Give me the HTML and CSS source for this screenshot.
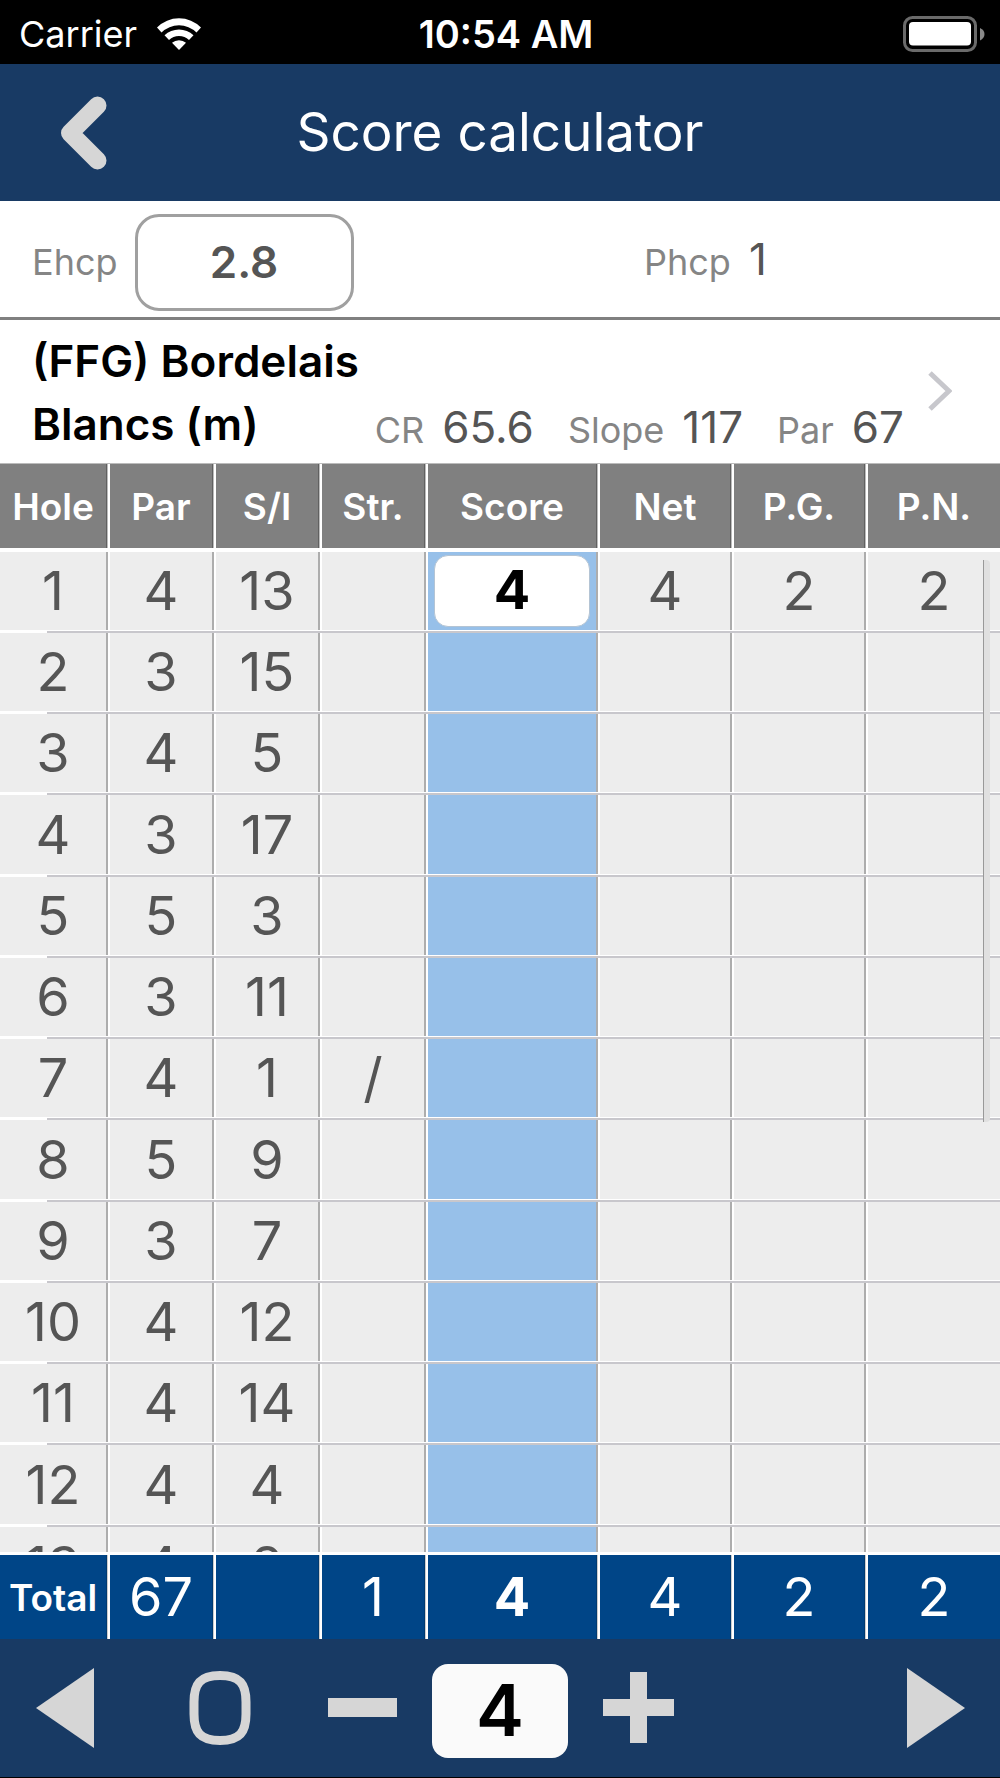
FILE: index.html
```html
<!DOCTYPE html>
<html lang="en">
<head>
<meta charset="utf-8">
<meta name="viewport" content="width=device-width, initial-scale=1">
<title>Score calculator</title>
<link rel="stylesheet" href="styles.css">
</head>
<body>
<div class="status">
  <div class="status-left">
    <span>Carrier</span>
    <svg class="wifi" viewBox="0 0 44 32" aria-hidden="true">
      <path d="M0 9.500A31 31 0 0 1 44 9.500L39.500 14.500A25 25 0 0 0 4.500 14.500Z"/>
      <path d="M7.500 17.200A21 21 0 0 1 36.500 17.200L32 22A14.500 14.500 0 0 0 12 22Z"/>
      <path d="M15 24.800A10.500 10.500 0 0 1 29 24.800L22 32Z"/>
    </svg>
  </div>
  <time class="clock">10:54 AM</time>
  <svg class="battery" viewBox="0 0 82 36" aria-hidden="true">
    <rect x="1.500" y="1.500" width="71" height="33" rx="8" fill="none" stroke="#6a6a6a" stroke-width="3"/>
    <rect x="6" y="6" width="62" height="23.500" rx="4" fill="#fff"/>
    <path d="M77 12Q81.500 14 81.500 18T77 24.500Z" fill="#8a8a8a"/>
  </svg>
</div>

<header class="navbar">
  <button class="back" type="button" aria-label="Back">
    <svg class="icon-back" viewBox="0 0 46 74" aria-hidden="true">
      <path d="M36.500 9.500L9 37L36.500 64.500" fill="none" stroke="#d6d6d6" stroke-width="18" stroke-linecap="round" stroke-linejoin="round"/>
    </svg>
  </button>
  <h1 class="title">Score calculator</h1>
</header>

<section class="handicap">
  <div class="exact">
    <label class="caption" for="ehcp">Ehcp</label>
    <input class="ehcp" id="ehcp" type="text" inputmode="decimal" value="2.8">
  </div>
  <div class="playing">
    <span class="caption">Phcp</span>
    <span class="value">1</span>
  </div>
</section>

<a class="course" href="#course">
  <span class="course-name">(FFG) Bordelais</span>
  <span class="course-tee">Blancs (m)</span>
  <span class="ratings">
    <span class="rating"><span class="caption">CR</span><span class="value">65.6</span></span>
    <span class="rating"><span class="caption">Slope</span><span class="value">117</span></span>
    <span class="rating"><span class="caption">Par</span><span class="value">67</span></span>
  </span>
  <svg class="chevron" viewBox="0 0 24 40" aria-hidden="true">
    <path d="M2 2L21 20L2 38" fill="none" stroke="#c7c7cc" stroke-width="5"/>
  </svg>
</a>

<main class="card">
  <table class="scores">
    <thead>
      <tr><th scope="col">Hole</th><th scope="col">Par</th><th scope="col">S/I</th><th scope="col">Str.</th><th scope="col">Score</th><th scope="col">Net</th><th scope="col">P.G.</th><th scope="col">P.N.</th></tr>
    </thead>
    <tbody>
      <tr><td>1</td><td>4</td><td>13</td><td></td><td class="score"><input class="score-input" type="text" inputmode="numeric" aria-label="Score for hole 1" value="4"></td><td>4</td><td>2</td><td>2</td></tr>
      <tr><td>2</td><td>3</td><td>15</td><td></td><td class="score"></td><td></td><td></td><td></td></tr>
      <tr><td>3</td><td>4</td><td>5</td><td></td><td class="score"></td><td></td><td></td><td></td></tr>
      <tr><td>4</td><td>3</td><td>17</td><td></td><td class="score"></td><td></td><td></td><td></td></tr>
      <tr><td>5</td><td>5</td><td>3</td><td></td><td class="score"></td><td></td><td></td><td></td></tr>
      <tr><td>6</td><td>3</td><td>11</td><td></td><td class="score"></td><td></td><td></td><td></td></tr>
      <tr><td>7</td><td>4</td><td>1</td><td>/</td><td class="score"></td><td></td><td></td><td></td></tr>
      <tr><td>8</td><td>5</td><td>9</td><td></td><td class="score"></td><td></td><td></td><td></td></tr>
      <tr><td>9</td><td>3</td><td>7</td><td></td><td class="score"></td><td></td><td></td><td></td></tr>
      <tr><td>10</td><td>4</td><td>12</td><td></td><td class="score"></td><td></td><td></td><td></td></tr>
      <tr><td>11</td><td>4</td><td>14</td><td></td><td class="score"></td><td></td><td></td><td></td></tr>
      <tr><td>12</td><td>4</td><td>4</td><td></td><td class="score"></td><td></td><td></td><td></td></tr>
      <tr><td>13</td><td>4</td><td>2</td><td></td><td class="score"></td><td></td><td></td><td></td></tr>
    </tbody>
    <tfoot>
      <tr><th scope="row">Total</th><td>67</td><td></td><td>1</td><td class="total-score">4</td><td>4</td><td>2</td><td>2</td></tr>
    </tfoot>
  </table>
  <div class="scroll-thumb"></div>
</main>

<footer class="toolbar">
  <button class="tool" type="button" aria-label="Previous hole">
    <svg class="icon-arrow" viewBox="0 0 58 80" aria-hidden="true"><path d="M58 0V80L0 40Z"/></svg>
  </button>
  <button class="tool" type="button" aria-label="Clear score">
    <svg class="icon-zero" viewBox="0 0 62 74" aria-hidden="true">
      <path d="M31 4.500C51 4.500 57 13 57 31V43C57 61 51 69.500 31 69.500S5 61 5 43V31C5 13 11 4.500 31 4.500Z" fill="none" stroke="#d6d6d6" stroke-width="9"/>
    </svg>
  </button>
  <button class="tool" type="button" aria-label="Decrease score">
    <svg class="icon-sign" viewBox="0 0 72 72" aria-hidden="true"><path d="M1 26H70V45H1Z"/></svg>
  </button>
  <input class="current" type="text" inputmode="numeric" aria-label="Current score" value="4">
  <button class="tool" type="button" aria-label="Increase score">
    <svg class="icon-sign" viewBox="0 0 72 72" aria-hidden="true"><path d="M27 0H44V27H71V44H44V71H27V44H0V27H27Z"/></svg>
  </button>
  <button class="tool tool-next" type="button" aria-label="Next hole">
    <svg class="icon-arrow" viewBox="0 0 58 80" aria-hidden="true"><path d="M0 0V80L58 40Z"/></svg>
  </button>
</footer>
</body>
</html>
```
FILE: styles.css
```css
* {
  box-sizing: border-box;
}

body {
  margin: 0;
  height: 100vh;
  display: flex;
  flex-direction: column;
  background: #fff;
  color: #000;
  font-family: Inter, "Liberation Sans", sans-serif;
  font-size: 36px;
  line-height: 1;
}

button {
  display: flex;
  align-items: center;
  justify-content: center;
  margin: 0;
  padding: 0;
  border: 0;
  background: none;
}

input {
  margin: 0;
  padding: 0;
  font-family: inherit;
  text-align: center;
}

svg {
  display: block;
  flex: none;
}

/* Status bar */
.status {
  flex: none;
  height: 64px;
  padding: 4px 15px 0 19px;
  display: grid;
  grid-template-columns: 1fr auto 1fr;
  align-items: center;
  background: #000;
  color: #fff;
}

.status-left {
  display: flex;
  align-items: center;
  gap: 20px;
}

.wifi {
  width: 44px;
  height: 32px;
  fill: #fff;
}

.clock {
  padding-left: 8px;
  font-size: 38px;
  font-weight: 600;
}

.battery {
  width: 82px;
  height: 36px;
  justify-self: end;
}

/* Title bar */
.navbar {
  flex: none;
  height: 137px;
  display: grid;
  grid-template-columns: 168px 1fr 168px;
  align-items: stretch;
  background: #183a64;
}

.icon-back {
  width: 46px;
  height: 74px;
}

.title {
  margin: 0;
  align-self: center;
  color: #fff;
  font-size: 53px;
  font-weight: 400;
  text-align: center;
}

/* Handicaps */
.handicap {
  flex: none;
  height: 119px;
  padding: 0 32px;
  display: grid;
  grid-template-columns: 612px 1fr;
  align-items: center;
  border-bottom: 3px solid #808080;
}

.exact {
  display: flex;
  align-items: center;
  gap: 17px;
  padding-top: 6px;
}

.playing {
  display: flex;
  align-items: baseline;
  gap: 18px;
}

.caption {
  color: #858585;
  font-size: 36px;
}

.value {
  color: #555;
  font-size: 44px;
}

.ehcp {
  width: 219px;
  height: 97px;
  border: 3px solid #a0a0a0;
  border-radius: 24px;
  background: #fff;
  color: #555;
  font-size: 44px;
  font-weight: 600;
}

/* Course */
.course {
  flex: none;
  height: 144px;
  padding: 10px 48px 8px 32px;
  display: grid;
  grid-template-columns: auto 1fr 24px;
  grid-template-rows: 1fr 1fr;
  column-gap: 24px;
  align-items: center;
  border-bottom: 1px solid #bbb;
  color: #000;
  font-size: 44px;
  font-weight: 600;
  text-decoration: none;
}

.course-name {
  grid-column: 1 / 3;
}

.ratings {
  display: flex;
  justify-content: flex-end;
  align-items: baseline;
  gap: 34px;
  padding-top: 6px;
  font-weight: 400;
}

.rating {
  display: flex;
  align-items: baseline;
  gap: 18px;
}

.chevron {
  grid-column: 3;
  grid-row: 1 / 3;
  width: 24px;
  height: 40px;
  margin-bottom: 4px;
}

/* Score card: the head and the totals stay put, the holes scroll between them */
.card {
  position: relative;
  flex: 1;
  min-height: 0;
}

.scroll-thumb {
  position: absolute;
  top: 96px;
  right: 10px;
  width: 7px;
  height: 562px;
  border-left: 1px solid #999;
  border-radius: 0 4px 4px 0;
  background: #e0e0e0;
}

.scores {
  display: flex;
  flex-direction: column;
  width: 100%;
  height: 100%;
}

.scores thead,
.scores tfoot {
  display: block;
  flex: none;
}

.scores tbody {
  display: block;
  flex: 1;
  min-height: 0;
  overflow-y: auto;
  scrollbar-width: none;
}

.scores tr {
  display: grid;
  grid-template-columns: 110fr 106fr 106fr 106fr 172fr 134fr 134fr 132fr;
  height: 81px;
}

.scores tbody tr:nth-child(4n) {
  height: 82px;
}

.scores thead tr {
  height: 88px;
}

.scores tfoot tr {
  height: 87px;
}

/* Each cell paints its own rules: a white and grey line at its foot,
   a grey and white one down its right edge. */
.scores th,
.scores td {
  --fill: #ededed;
  --rule: linear-gradient(#c8c7cc, #c8c7cc);
  display: flex;
  align-items: center;
  justify-content: center;
  min-width: 0;
  padding: 0 4px 3px 0;
  background:
    var(--rule) bottom / 100% 2px no-repeat,
    linear-gradient(#fff, #fff) bottom / 100% 3px no-repeat,
    linear-gradient(90deg, #adadad 2px, #fff 2px) right / 4px 100% no-repeat,
    var(--fill);
  color: #555;
  font-size: 54px;
}

.scores tbody td:first-child {
  --rule: linear-gradient(90deg, #fff 47px, #c8c7cc 47px);
}

.scores tbody td:last-child {
  padding-right: 0;
  background:
    var(--rule) bottom / 100% 2px no-repeat,
    linear-gradient(#fff, #fff) bottom / 100% 3px no-repeat,
    var(--fill);
}

.scores .score {
  --fill: #97c0e9;
}

.score-input {
  width: 156px;
  height: 72px;
  padding-bottom: 3px;
  border: 1px solid #b4c4d4;
  border-radius: 14px;
  background: #fff;
  color: #000;
  font-size: 54px;
  font-weight: 700;
}

.scores thead th {
  padding-bottom: 4px;
  background:
    linear-gradient(#fff, #fff) bottom / 100% 4px no-repeat,
    linear-gradient(90deg, #606060 1px, #bbb 1px, #bbb 2px, #fff 2px) right / 4px 100% no-repeat,
    #808080;
  color: #fff;
  font-size: 37px;
  font-weight: 600;
}

.scores thead th:last-child {
  padding-right: 0;
  background: linear-gradient(#fff, #fff) bottom / 100% 4px no-repeat, #808080;
}

.scores tfoot th,
.scores tfoot td {
  padding: 3px 4px 0 0;
  background:
    linear-gradient(#fff, #fff) top / 100% 3px no-repeat,
    linear-gradient(90deg, #003a70 1px, #ccc 1px, #ccc 2px, #fff 2px) right / 4px 100% no-repeat,
    #004587;
  color: #fff;
}

.scores tfoot td:last-child {
  padding-right: 0;
  background: linear-gradient(#fff, #fff) top / 100% 3px no-repeat, #004587;
}

.scores tfoot th {
  font-size: 37px;
  font-weight: 600;
}

.scores .total-score {
  font-weight: 700;
}

/* Score entry */
.toolbar {
  flex: none;
  height: 139px;
  display: grid;
  grid-template-columns: 130fr 180fr 106fr 168fr 109fr 178fr 129fr;
  align-items: stretch;
  border-bottom: 1px solid #000;
  background: #183a64;
}

.tool {
  fill: #d6d6d6;
}

.tool-next {
  grid-column: 7;
}

.icon-arrow {
  width: 58px;
  height: 80px;
}

.icon-zero {
  width: 62px;
  height: 74px;
}

.icon-sign {
  width: 72px;
  height: 72px;
}

.current {
  min-width: 0;
  margin: 25px 16px 19px;
  padding-bottom: 4px;
  border: 0;
  border-radius: 16px;
  background: #fafafa;
  color: #000;
  font-size: 72px;
  font-weight: 600;
}
```
